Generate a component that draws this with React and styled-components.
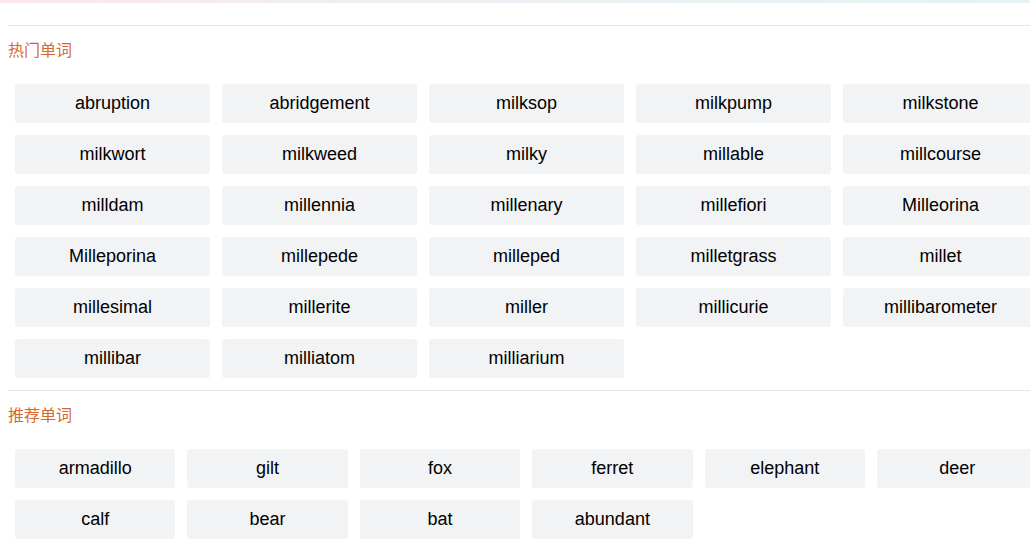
import React from 'react';
import styled, { createGlobalStyle } from 'styled-components';

const hotWords = [
  'abruption', 'abridgement', 'milksop', 'milkpump', 'milkstone',
  'milkwort', 'milkweed', 'milky', 'millable', 'millcourse',
  'milldam', 'millennia', 'millenary', 'millefiori', 'Milleorina',
  'Milleporina', 'millepede', 'milleped', 'milletgrass', 'millet',
  'millesimal', 'millerite', 'miller', 'millicurie', 'millibarometer',
  'millibar', 'milliatom', 'milliarium',
];

const recWords = [
  'armadillo', 'gilt', 'fox', 'ferret', 'elephant', 'deer',
  'calf', 'bear', 'bat', 'abundant',
];

const GlobalStyle = createGlobalStyle`
  html, body {
    margin: 0;
    padding: 0;
    overflow: hidden;
    background: #fff;
  }
  body {
    font-family: "Liberation Sans", Arial, "Noto Sans CJK SC", sans-serif;
  }
`;

const App = () => (
  <>
    <GlobalStyle />
    <TopStrip />
    <Page>
      <Divider />
      <SectionTitle>热门单词</SectionTitle>
      <WordGrid cols={5} colWidth="195px">
        {hotWords.map((w) => (
          <Word key={w}>{w}</Word>
        ))}
      </WordGrid>
      <Divider />
      <SectionTitle>推荐单词</SectionTitle>
      <WordGrid cols={6} colWidth="160.4px">
        {recWords.map((w) => (
          <Word key={w}>{w}</Word>
        ))}
      </WordGrid>
    </Page>
  </>
);

const TopStrip = styled.div`
  height: 3px;
  background: linear-gradient(90deg, #fbe8ee 0%, #eeeff3 40%, #e4f3f3 100%);
`;

const Page = styled.div`
  padding-left: 8px;
`;

const Divider = styled.div`
  height: 1px;
  margin-top: 22px;
  background: #e6e6e6;

  & ~ & {
    margin-top: 12px;
  }
`;

const SectionTitle = styled.div`
  margin-top: 11px;
  height: 24px;
  line-height: 24px;
  font-size: 16px;
  color: #d4692f;
  font-family: "Microsoft YaHei", "Noto Sans CJK SC", sans-serif;
`;

const WordGrid = styled.div`
  display: grid;
  grid-template-columns: repeat(${(p) => p.cols}, ${(p) => p.colWidth});
  grid-auto-rows: 39px;
  gap: 12px;
  margin-top: 23px;
  padding-left: 7px;
`;

const Word = styled.div`
  display: flex;
  align-items: center;
  justify-content: center;
  background: #f2f3f5;
  border-radius: 3px;
  font-size: 18px;
  color: #000;
  white-space: nowrap;
`;

export default App;
